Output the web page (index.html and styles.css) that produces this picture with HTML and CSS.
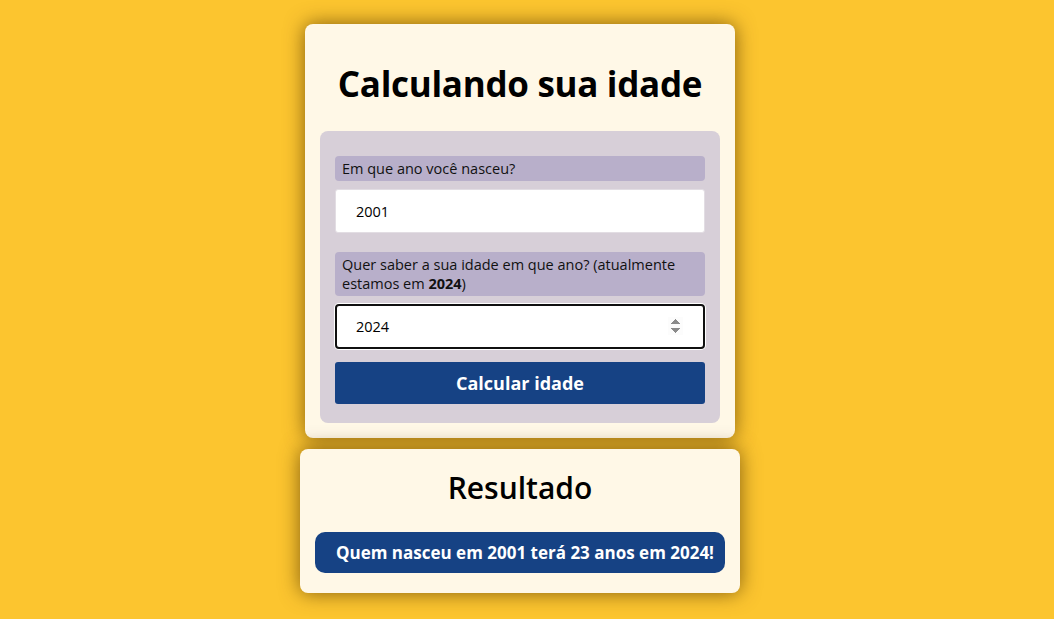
FILE: index.html
```html
<!DOCTYPE html>
<html lang="pt-BR">
<head>
<meta charset="utf-8">
<title>Calculando sua idade</title>
<link rel="stylesheet" href="styles.css">
</head>
<body>
<main class="page">
  <section class="card card-form">
    <h1 class="title">Calculando sua idade</h1>
    <form class="panel">
      <label class="label" for="nasc">Em que ano você nasceu?</label>
      <input class="field" id="nasc" type="number" value="2001">
      <label class="label label-2" for="ano">Quer saber a sua idade em que ano? (atualmente estamos em <strong>2024</strong>)</label>
      <input class="field field-focus" id="ano" type="number" value="2024">
      <button class="btn" type="button">Calcular idade</button>
    </form>
  </section>
  <section class="card card-result">
    <h2 class="subtitle">Resultado</h2>
    <p class="result">Quem nasceu em 2001 terá 23 anos em 2024!</p>
  </section>
</main>
</body>
</html>
```

FILE: styles.css
```css
html, body {
  margin: 0;
  padding: 0;
}
body {
  background: #fcc52f;
  font-family: "Open Sans", "DejaVu Sans", sans-serif;
  color: #000;
  min-height: 619px;
}
.page {
  display: flex;
  flex-direction: column;
  align-items: center;
  padding: 24px 14px 0 0;
  gap: 11px;
}
.card {
  background: #fff8e7;
  border-radius: 8px;
  box-shadow: 0 0 20px rgba(80, 50, 0, 0.7);
  box-sizing: border-box;
}
.card-form {
  width: 430px;
  padding: 0 15px 15px;
}
.title {
  margin: 39px 0 26px;
  font-size: 35px;
  line-height: 42px;
  font-weight: 700;
  text-align: center;
  letter-spacing: -0.3px;
}
.panel {
  background: #d7cfd8;
  border-radius: 8px;
  padding: 25px 15px 19px;
  display: flex;
  flex-direction: column;
}
.label {
  background: #b8afca;
  border-radius: 4px;
  padding: 3px 7px;
  font-size: 14.5px;
  line-height: 19px;
  color: #111;
}
.label strong {
  font-weight: 700;
}
.label-2 {
  margin-top: 19px;
}
.field {
  margin-top: 8px;
  height: 44px;
  box-sizing: border-box;
  border: 1px solid #e2dde3;
  border-radius: 3px;
  background: #fff;
  padding: 0 20px 0 20px;
  font-family: inherit;
  font-size: 14.5px;
  color: #000;
  outline: none;
}
.field-focus {
  height: 45px;
  border: 2px solid #101010;
  border-radius: 4px;
  padding-left: 19px;
  box-shadow: 0 0 0 1px #fff;
}
.field::-webkit-inner-spin-button {
  opacity: 0;
}
.field-focus::-webkit-inner-spin-button {
  opacity: 1;
  background: #efefef;
}
.btn {
  margin-top: 13px;
  height: 42px;
  border: none;
  border-radius: 3px;
  background: #164284;
  color: #fff;
  font-family: inherit;
  font-weight: 700;
  font-size: 18px;
}
.card-result {
  width: 440px;
  padding: 0 15px 20px;
}
.subtitle {
  margin: 19px 0 0;
  height: 64px;
  line-height: 40px;
  font-size: 30px;
  font-weight: 600;
  text-align: center;
}
.result {
  margin: 0;
  background: #164284;
  color: #fff;
  border-radius: 10px;
  height: 41px;
  line-height: 41px;
  padding-left: 10px;
  text-align: center;
  font-weight: 700;
  font-size: 17px;
}
```
